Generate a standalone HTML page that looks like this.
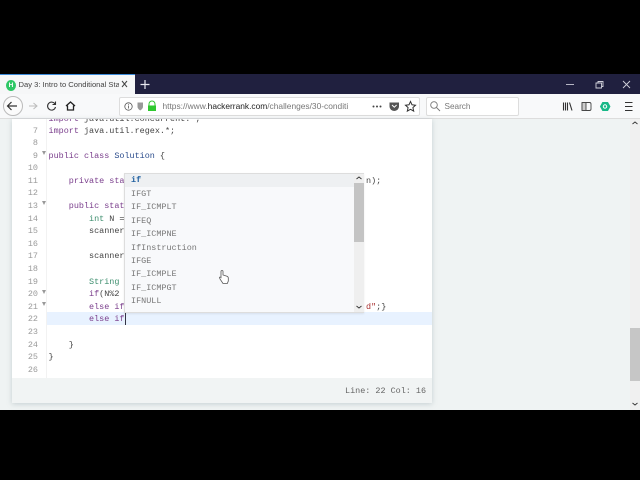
<!DOCTYPE html>
<html><head><meta charset="utf-8">
<style>
html,body{margin:0;padding:0;width:640px;height:480px;overflow:hidden;background:#000}
*{box-sizing:border-box}
.a{position:absolute}
#root{position:absolute;left:0;top:0;width:640px;height:480px;overflow:hidden;font-family:"Liberation Sans",sans-serif;filter:blur(.3px)}
.l,.n,.p{position:absolute;font-family:"Liberation Mono",monospace;font-size:8.45px;line-height:12px;white-space:pre;color:#444}
.l,.n{margin-top:.7px}
.n{width:26px;text-align:right;left:12px;color:#9a9a9a}
.l{left:48.5px}
.p{left:131px;color:#777;font-family:"Liberation Mono",monospace;font-size:8.45px}
.k{color:#7a3e8c}.t{color:#3f8f6f}.s{color:#a33}
.fold{position:absolute;left:41.5px;width:0;height:0;border-left:2.5px solid transparent;border-right:2.5px solid transparent;border-top:4px solid #999}
</style></head><body><div id="root">
<div class="a" style="left:0;top:74px;width:640px;height:20px;background:#20203f"></div>
<div class="a" style="left:0;top:74px;width:135px;height:20px;background:#f6f7f8;border-top:1px solid #3c8ad8"></div>
<div class="a" style="left:6px;top:79.500px;width:10px;height:11px;border-radius:50%;background:#2ec866;color:#fff;font:bold 6.500px/11px 'Liberation Sans';text-align:center">H</div>
<div class="a" style="left:18.500px;top:79px;width:100px;height:12px;overflow:hidden;font-size:7.600px;line-height:12px;color:#444;white-space:nowrap">Day 3: Intro to Conditional Stat</div>
<svg class="a" style="left:0;top:74px" width="640" height="44" viewBox="0 74 640 44">
<path d="M122 81l5 6M127 81l-5 6" stroke="#444" stroke-width="1" fill="none"/>
<path d="M145 80v9M140.500 84.500h9" stroke="#e8e8f0" stroke-width="1.200" fill="none"/>
<path d="M566 84.500h8" stroke="#c8c8d4" stroke-width=".9"/>
<path d="M596 83h5.500v5h-5.500zM598 83v-1.500h5v5h-1.500" stroke="#d0d0da" stroke-width=".9" fill="none"/>
<path d="M623 81l7 7M630 81l-7 7" stroke="#d0d0da" stroke-width=".9" fill="none"/>
</svg>
<div class="a" style="left:0;top:94px;width:640px;height:24.500px;background:#f8f9fa;border-bottom:1px solid #ddd"></div>
<div class="a" style="left:2.500px;top:96px;width:20px;height:20px;border-radius:50%;background:#fbfbfb;border:1px solid #bbb"></div>
<div class="a" style="left:118.500px;top:97px;width:301px;height:19px;background:#fff;border:1px solid #ddd;border-radius:2px"></div>
<div class="a" style="left:425.500px;top:97px;width:93px;height:19px;background:#fff;border:1px solid #ddd;border-radius:2px"></div>
<div class="a" style="left:162.500px;top:100px;width:190px;height:13px;overflow:hidden;font-size:8.400px;line-height:13px;color:#777;white-space:nowrap">https://www.<span style="color:#222">hackerrank.com</span>/challenges/30-conditi</div>
<div class="a" style="left:444.500px;top:100px;font-size:8.200px;line-height:13px;color:#777">Search</div>
<svg class="a" style="left:0;top:94px" width="640" height="25" viewBox="0 94 640 25">
<path d="M17 106H8M11.500 102L7.500 106L11.500 110" stroke="#333" stroke-width="1.200" fill="none"/>
<path d="M37 106h-8M33.500 103l3.500 3-3.500 3" stroke="#bbb" stroke-width="1" fill="none"/>
<path d="M55 104a4 4 0 1 0 .5 3M55.500 101.500v3h-3" stroke="#333" stroke-width="1.100" fill="none"/>
<path d="M66 106l4.500-4 4.500 4M67.500 105.500v4.500h6v-4.500" stroke="#222" stroke-width="1.300" fill="none"/>
<circle cx="128.500" cy="106.500" r="3.700" fill="none" stroke="#555" stroke-width=".8"/><path d="M128.500 105.500v3M128.500 104v.8" stroke="#555" stroke-width=".8"/>
<path d="M137.500 102.500h5.500v4c0 2-1.500 3-2.750 4-1.250-1-2.750-2-2.750-4z" fill="#999"/>
<path d="M149 105.500v-1.500a3 3 0 0 1 6 0v1.500" fill="none" stroke="#2ec82e" stroke-width="1"/><rect x="148" y="105.500" width="8" height="5.500" fill="#2ec82e"/>
<circle cx="373.500" cy="106.500" r="1" fill="#444"/><circle cx="377" cy="106.500" r="1" fill="#444"/><circle cx="380.500" cy="106.500" r="1" fill="#444"/>
<path d="M389.500 102.500h9.500v4a4.750 4.500 0 0 1-9.500 0z" fill="#555"/><path d="M392 105l2.300 2.200 2.300-2.200" stroke="#fff" stroke-width="1" fill="none"/>
<path d="M410.500 101.500l1.500 3.300 3.500.4-2.600 2.400.8 3.500-3.200-1.800-3.200 1.800.8-3.500-2.600-2.400 3.500-.4z" fill="none" stroke="#333" stroke-width="1"/>
<circle cx="434" cy="105" r="3.300" fill="none" stroke="#777" stroke-width=".9"/><path d="M436.500 107.500l3.500 3.500" stroke="#777" stroke-width=".9"/>
<path d="M563.500 102.500v8M565.500 102.500v8M567.500 102.500v8M569.500 102.500l2.500 8" stroke="#333" stroke-width="1.100" fill="none"/>
<rect x="582" y="102.500" width="9" height="8" rx="1.500" fill="none" stroke="#444" stroke-width=".9"/><rect x="582" y="102.500" width="4" height="8" fill="#ccc" stroke="#444" stroke-width=".9"/>
<path d="M600.500 106.500l2.200-4h5l2.200 4-2.200 4h-5z" fill="#18b888" stroke="#18b888"/><circle cx="605" cy="106.500" r="1.700" fill="none" stroke="#fff" stroke-width="1"/>
<path d="M625 102.500h7.500M625 106.500h7.500M625 110.500h7.500" stroke="#333" stroke-width="1.100"/>
</svg>
<div class="a" style="left:0;top:118.500px;width:640px;height:291.500px;background:#eff3f3"></div>
<div class="a" style="left:12px;top:118.500px;width:420px;height:284px;background:#fff;box-shadow:0 1px 5px rgba(120,140,150,.35)"></div>
<div class="a" style="left:12px;top:378px;width:420px;height:24.500px;background:#f1f4f4"></div>
<div class="a" style="left:345px;top:385px;font:8.450px/12px 'Liberation Mono',monospace;color:#666;white-space:pre">Line: 22 Col: 16</div>
<div class="a" style="left:46px;top:118.500px;width:1px;height:259.500px;background:#f2f2f2"></div>
<div class="a" style="left:47px;top:312px;width:385px;height:12.500px;background:#e8f2ff"></div>
<div class="a" style="left:12px;top:118.500px;width:420px;height:260px;overflow:hidden">
<div class="l" style="left:36.500px;top:-6px"><span class="k">import</span> java.util.concurrent.*;</div>
</div>
<div class="n" style="top:124px">7</div><div class="l" style="top:124px"><span class="k">import</span> java.util.regex.*;</div>
<div class="n" style="top:136.500px">8</div>
<div class="n" style="top:149px">9</div><div class="l" style="top:149px"><span class="k">public class</span> <span style="color:#2b4c8c">Solution</span> {</div>
<div class="n" style="top:161.500px">10</div>
<div class="n" style="top:174px">11</div><div class="l" style="top:174px">    <span class="k">private sta</span></div>
<div class="n" style="top:186.500px">12</div>
<div class="n" style="top:199px">13</div><div class="l" style="top:199px">    <span class="k">public stat</span></div>
<div class="n" style="top:212px">14</div><div class="l" style="top:212px">        <span class="t">int</span> N =</div>
<div class="n" style="top:224.500px">15</div><div class="l" style="top:224.500px">        scanner</div>
<div class="n" style="top:237px">16</div>
<div class="n" style="top:249.500px">17</div><div class="l" style="top:249.500px">        scanner</div>
<div class="n" style="top:262px">18</div>
<div class="n" style="top:275px">19</div><div class="l" style="top:275px">        <span class="t">String</span></div>
<div class="n" style="top:287.500px">20</div><div class="l" style="top:287.500px">        <span class="k">if</span>(N%2</div>
<div class="n" style="top:300px">21</div><div class="l" style="top:300px">        <span class="k">else if</span></div>
<div class="n" style="top:312.500px">22</div><div class="l" style="top:312.500px">        <span class="k">else if</span></div>
<div class="n" style="top:325px">23</div>
<div class="n" style="top:338px">24</div><div class="l" style="top:338px">    }</div>
<div class="n" style="top:350.500px">25</div><div class="l" style="top:350.500px">}</div>
<div class="n" style="top:363px">26</div>
<div class="fold" style="top:151px"></div><div class="fold" style="top:201px"></div><div class="fold" style="top:289.500px"></div><div class="fold" style="top:302px"></div>
<div class="a" style="left:124px;top:172.500px;width:240px;height:140px;background:#f8f9fb;border:1px solid #ddd;box-shadow:0 1px 2px rgba(0,0,0,.08)"></div>
<div class="a" style="left:125px;top:173.500px;width:229px;height:13px;background:#eef0f2"></div>
<div class="a" style="left:354px;top:173.500px;width:9.500px;height:138px;background:#efefef"></div>
<div class="a" style="left:354px;top:183px;width:9.500px;height:58.500px;background:#c4c4c4"></div>
<svg class="a" style="left:354px;top:173px" width="10" height="140"><path d="M2.500 6l2.500-2 2.500 2" stroke="#333" fill="none" stroke-width=".9"/><path d="M2.500 133l2.500 2 2.500-2" stroke="#333" fill="none" stroke-width=".9"/></svg>
<div class="p" style="top:174px;color:#2060a0;font-weight:bold">if</div>
<div class="p" style="top:187.500px">IFGT</div>
<div class="p" style="top:201px">IF_ICMPLT</div>
<div class="p" style="top:214.500px">IFEQ</div>
<div class="p" style="top:228px">IF_ICMPNE</div>
<div class="p" style="top:241.500px">IfInstruction</div>
<div class="p" style="top:254.500px">IFGE</div>
<div class="p" style="top:268px">IF_ICMPLE</div>
<div class="p" style="top:281.500px">IF_ICMPGT</div>
<div class="p" style="top:295px">IFNULL</div>
<div class="a" style="left:124.500px;top:312.500px;width:1px;height:12px;background:#334"></div>
<div class="l" style="left:366px;top:174px">n);</div>
<div class="l" style="left:366px;top:300px"><span class="s">d"</span>;}</div>
<svg class="a" style="left:218px;top:269px" width="12" height="16"><path d="M3 7V2.500a1 1 0 0 1 2 0V6l4 1.200c1 .3 1.300 1 1.300 2V12l-1 2.500H5L2 10 1.500 8.500c.4-.6 1-.5 1.500 0z" fill="#fff" stroke="#555" stroke-width=".8"/></svg>
<div class="a" style="left:630px;top:118.500px;width:10px;height:291.500px;background:#f0f0f0"></div>
<div class="a" style="left:630px;top:328px;width:10px;height:53px;background:#c6c6c6"></div>
<svg class="a" style="left:630px;top:118px" width="10" height="292"><path d="M2.500 6l2.500-2 2.500 2" stroke="#333" fill="none" stroke-width=".9"/><path d="M2.500 285l2.500 2 2.500-2" stroke="#333" fill="none" stroke-width=".9"/></svg>
<div class="a" style="left:0;top:410px;width:640px;height:70px;background:#000"></div>
</div></body></html>
